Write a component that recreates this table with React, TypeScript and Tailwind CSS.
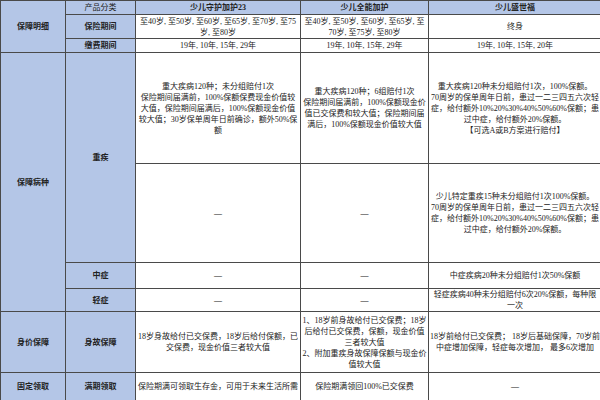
const blue = "bg-[#b4c6e7]";

function Cell({
  className = "",
  children,
}: {
  className?: string;
  children?: React.ReactNode;
}) {
  return (
    <div className={`flex items-center justify-center text-center px-[1px] ${className}`}>
      <div>{children}</div>
    </div>
  );
}

const Dash = () => <span>—</span>;

export default function App() {
  return (
    <div
      className="w-[600px] h-[400px] bg-[#4a4a4a] overflow-hidden text-[#222] text-[8px] leading-[11px]"
      style={{ fontFamily: '"Liberation Serif", "Noto Sans CJK SC", serif' }}
    >
      <div className="grid h-full gap-[1px] grid-cols-[64px_69px_164px_127px_172px] grid-rows-[13px_23px_13px_110px_98px_25px_22px_60px_27px] border border-[#4a4a4a]">
        {/* 保障明细 */}
        <Cell className={`${blue} row-span-3 font-bold`}>保障明细</Cell>
        <Cell className={blue}>产品分类</Cell>
        <Cell className={`${blue} font-bold`}>少儿守护加护23</Cell>
        <Cell className={`${blue} font-bold`}>少儿全能加护</Cell>
        <Cell className={`${blue} font-bold`}>少儿盛世福</Cell>

        <Cell className={`${blue} font-bold`}>保险期间</Cell>
        <Cell className="bg-white">至40岁, 至50岁, 至60岁, 至65岁, 至70岁, 至75岁, 至80岁</Cell>
        <Cell className="bg-white">至40岁, 至50岁, 至60岁, 至65岁, 至70岁, 至75岁, 至80岁</Cell>
        <Cell className="bg-white">终身</Cell>

        <Cell className={`${blue} font-bold`}>缴费期间</Cell>
        <Cell className="bg-white">19年, 10年, 15年, 29年</Cell>
        <Cell className="bg-white">19年, 10年, 15年, 29年</Cell>
        <Cell className="bg-white">19年, 10年, 15年, 20年</Cell>

        {/* 保障病种 */}
        <Cell className={`${blue} row-span-4 font-bold`}>保障病种</Cell>
        <Cell className={`${blue} row-span-2 font-bold`}>重疾</Cell>
        <Cell className="bg-white">
          重大疾病120种；未分组赔付1次
          <br />
          保险期间届满前，100%保额保费现金价值较大值，保险期间届满后，100%保额现金价值较大值；30岁保单周年日前确诊，额外50%保额
        </Cell>
        <Cell className="bg-white">
          重大疾病120种；6组赔付1次
          <br />
          保险期间届满前，100%保额现金价值已交保费和较大值；保险期间届满后，100%保额现金价值较大值
        </Cell>
        <Cell className="bg-white">
          重大疾病120种未分组赔付1次，100%保额。
          <br />
          70周岁的保单周年日前，患过一二三四五六次轻症，给付额外10%20%30%40%50%60%保额；患过中症，给付额外20%保额。
          <br />
          【可选A或B方案进行赔付】
        </Cell>

        <Cell className="bg-white"><Dash /></Cell>
        <Cell className="bg-white"><Dash /></Cell>
        <Cell className="bg-white">
          少儿特定重疾15种未分组赔付1次100%保额。
          <br />
          70周岁的保单周年日前，患过一二三四五六次轻症，给付额外10%20%30%40%50%60%保额；患过中症，给付额外20%保额。
        </Cell>

        <Cell className={`${blue} font-bold`}>中症</Cell>
        <Cell className="bg-white"><Dash /></Cell>
        <Cell className="bg-white"><Dash /></Cell>
        <Cell className="bg-white">中症疾病20种未分组赔付1次50%保额</Cell>

        <Cell className={`${blue} font-bold`}>轻症</Cell>
        <Cell className="bg-white"><Dash /></Cell>
        <Cell className="bg-white"><Dash /></Cell>
        <Cell className="bg-white">轻症疾病40种未分组赔付6次20%保额，每种限一次</Cell>

        {/* 身价保障 */}
        <Cell className={`${blue} font-bold`}>身价保障</Cell>
        <Cell className={`${blue} font-bold`}>身故保障</Cell>
        <Cell className="bg-white">18岁身故给付已交保费，18岁后给付保额，已交保费，现金价值三者较大值</Cell>
        <Cell className="bg-white">
          1、18岁前身故给付已交保费；18岁后给付已交保费，保额，现金价值三者较大值
          <br />
          2、附加重疾身故保障保额与现金价值较大值
        </Cell>
        <Cell className="bg-white">18岁前给付已交保费； 18岁后基础保障，70岁前中症增加保障，轻症每次增加， 最多6次增加</Cell>

        {/* 固定领取 */}
        <Cell className={`${blue} font-bold`}>固定领取</Cell>
        <Cell className={`${blue} font-bold`}>满期领取</Cell>
        <Cell className="bg-white">保险期满可领取生存金，可用于未来生活所需</Cell>
        <Cell className="bg-white">保险期满领回100%已交保费</Cell>
        <Cell className="bg-white"><Dash /></Cell>
      </div>
    </div>
  );
}
